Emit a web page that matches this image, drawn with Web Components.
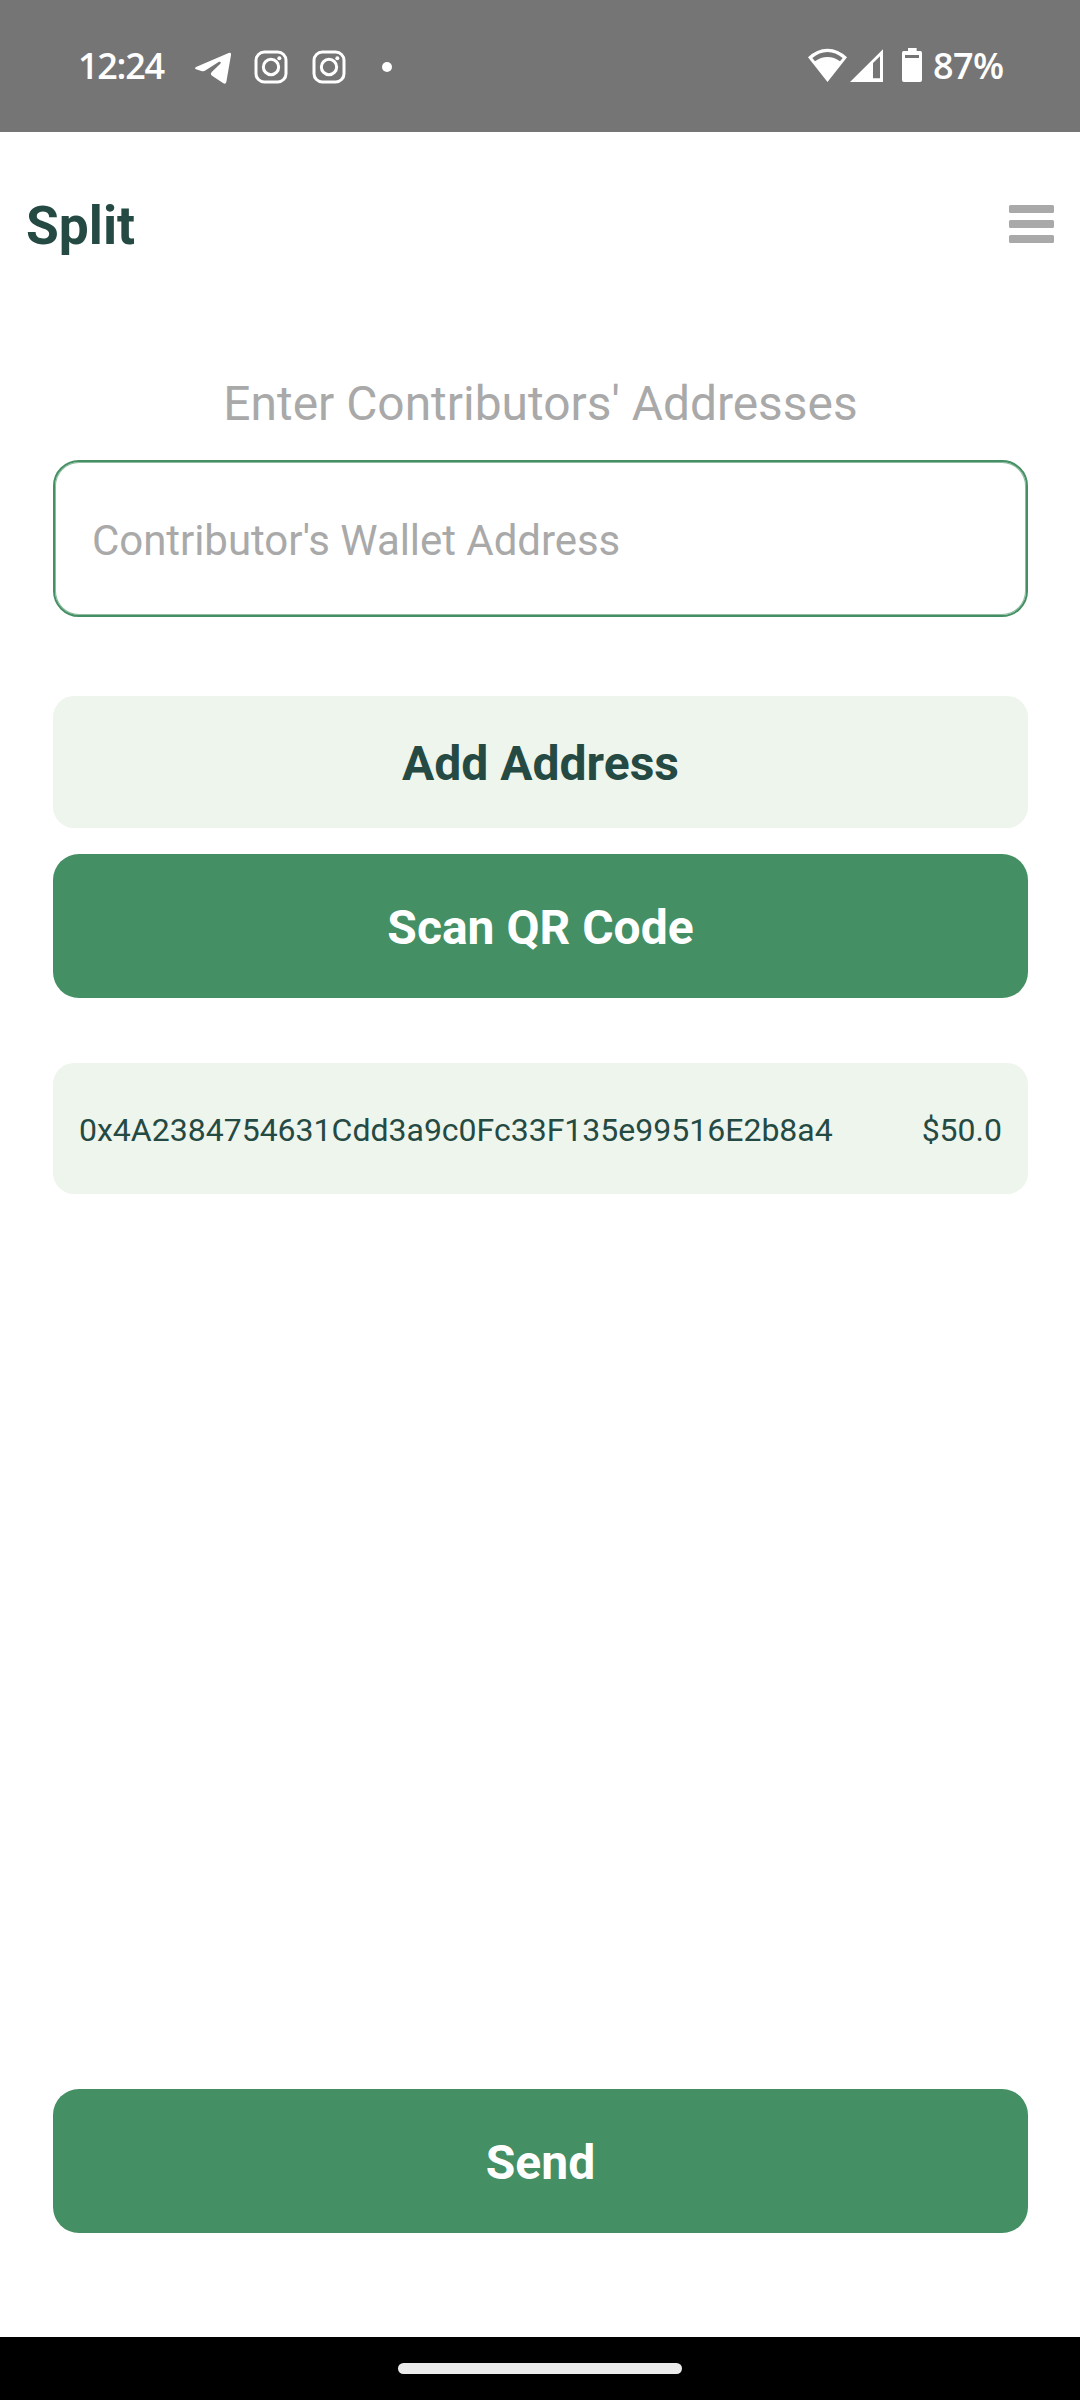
<!DOCTYPE html>
<html lang="en">
<head>
<meta charset="utf-8">
<title>Split</title>
<style>
  html, body { margin: 0; padding: 0; background: #fff; }
  body { font-family: Roboto, "Liberation Sans", sans-serif; width: 1080px; height: 2400px; overflow: hidden; }
</style>
</head>
<body>
<split-screen>
  <status-bar slot="status" time="12:24" battery="87%"></status-bar>
  <app-header slot="header">Split</app-header>
  <form-label>Enter Contributors' Addresses</form-label>
  <address-field>Contributor's Wallet Address</address-field>
  <action-button kind="soft">Add Address</action-button>
  <action-button kind="solid">Scan QR Code</action-button>
  <contributor-row><span slot="address">0x4A2384754631Cdd3a9c0Fc33F135e99516E2b8a4</span><span slot="amount">$50.0</span></contributor-row>
  <action-button kind="solid" slot="footer">Send</action-button>
  <nav-bar slot="nav"></nav-bar>
</split-screen>
<script>
const define = (name, html, init) => {
  const tpl = document.createElement('template');
  tpl.innerHTML = html;
  customElements.define(name, class extends HTMLElement {
    constructor() {
      super();
      this.attachShadow({ mode: 'open' }).append(tpl.content.cloneNode(true));
    }
    connectedCallback() { if (init) init(this, this.shadowRoot); }
  });
};

define('split-screen', `
<style>
  :host { display: flex; flex-direction: column; height: 2400px; background: #fff; }
  main { flex: 1; display: flex; flex-direction: column; padding: 0 52px 0 53px; }
  footer { padding: 0 52px 104px 53px; }
</style>
<slot name="status"></slot>
<slot name="header"></slot>
<main><slot></slot></main>
<footer><slot name="footer"></slot></footer>
<slot name="nav"></slot>`);

define('insta-icon', `
<style>:host { display: block; width: 34px; height: 72px; } svg { display: block; }</style>
<svg width="34" height="72" viewBox="0 0 102 216" fill="none" stroke="#fff" stroke-width="9">
  <rect x="6" y="66" width="90" height="90" rx="25"/>
  <circle cx="51" cy="111" r="23"/>
  <circle cx="76" cy="85" r="6" fill="#fff" stroke="none"/>
</svg>`);

define('status-bar', `
<style>
  :host { display: flex; box-sizing: border-box; height: 132px; padding: 30px 75px 30px 78px; background: #757575; color: #fff;
    font: 600 36px/72px "Open Sans", "Noto Sans", sans-serif; }
  svg { display: block; flex: none; }
  .time { width: 117px; letter-spacing: -1.3px; white-space: nowrap; }
  .tg { margin-right: 23px; }
  insta-icon + insta-icon { margin-left: 24px; }
  .dot { margin-left: 35px; }
  .signal { margin: 0 19px 0 3px; }
  .space { flex: 1; }
  .pct { width: 72px; margin-left: 11px; letter-spacing: -0.6px; white-space: nowrap; }
</style>
<span class="time"></span>
<svg class="tg" width="36" height="72" viewBox="405 0 108 216" fill="#fff">
  <path d="M408 111 L506 69 Q514 66 513 75 L499 156 Q497 164 489 159 L456 137 Q449 132 456 125 L481 101 Q485 94 477 95 L437 121 Q431 125 424 123 L408 118 Q402 115 408 111Z"/>
</svg>
<insta-icon></insta-icon><insta-icon></insta-icon>
<svg class="dot" width="12" height="72" viewBox="962 0 36 216"><circle cx="980" cy="111" r="15" fill="#fff"/></svg>
<span class="space"></span>
<svg width="39" height="72" viewBox="84 0 117 216" fill="#fff">
  <path fill-rule="evenodd" d="M142.500 56 Q175 56 201 82 L142.500 156 L84 82 Q110 56 142.500 56Z M142.500 66 Q118 66 97 84 L105 94 Q122 81 142.500 81 Q163 81 180 94 L188 84 Q167 66 142.500 66Z"/>
</svg>
<svg class="signal" width="33" height="72" viewBox="210 0 99 216" fill="#fff">
  <path fill-rule="evenodd" d="M309 58 V156 H210Z M279 99 V145 H300 V79Z"/>
</svg>
<svg width="20" height="72" viewBox="366 0 60 216" fill="#fff">
  <path fill-rule="evenodd" d="M384 54 H410 V63 H421 Q426 63 426 68 V150 Q426 156 420 156 H372 Q366 156 366 150 V68 Q366 63 371 63 H384Z M375 75 V84 H417 V75Z"/>
</svg>
<span class="pct"></span>`, (el, root) => {
  root.querySelector('.time').textContent = el.getAttribute('time');
  root.querySelector('.pct').textContent = el.getAttribute('battery');
});

define('menu-icon', `
<style>
  :host { display: flex; flex-direction: column; gap: 7px; width: 45px; }
  i { height: 8px; border-radius: 1.500px; background: #a9a9a9; }
</style><i></i><i></i><i></i>`);

define('app-header', `
<style>
  :host { display: flex; align-items: center; justify-content: space-between; box-sizing: border-box; height: 184px; padding: 0 26px; }
  h1 { margin: 3px 0 0; font-size: 53.3px; line-height: 62px; font-weight: 700; color: #254a43; }
</style>
<h1><slot></slot></h1><menu-icon></menu-icon>`);

define('form-label', `
<style>
  :host { display: block; margin-top: 60px; height: 84px; text-align: center; font-size: 47.9px; line-height: 56px; color: #a9a9a9; }
</style><slot></slot>`);

define('address-field', `
<style>
  :host { display: flex; align-items: center; box-sizing: border-box; height: 157px; border: 2px solid #448f63; border-radius: 26px;
    box-shadow: inset 0 0 0 1px #8dbca0; padding: 4px 37px 0; margin-bottom: 79px; font-size: 42px; letter-spacing: -0.05px; line-height: 50px; color: #a9a9a9; }
</style><slot></slot>`);

define('action-button', `
<style>
  :host { display: flex; align-items: center; justify-content: center; box-sizing: border-box; padding-top: 3px;
    font-size: 48px; line-height: 56px; font-weight: 700; }
  :host([kind=soft]) { height: 132px; margin-bottom: 26px; border-radius: 21px; background: #eef5ed; color: #254a43; }
  :host([kind=solid]) { height: 144px; border-radius: 26px; background: #448f63; color: #fff; }
</style><slot></slot>`);

define('contributor-row', `
<style>
  :host { display: flex; align-items: center; justify-content: space-between; box-sizing: border-box; height: 131px; margin-top: 65px;
    padding: 2px 26px 0; border-radius: 21px; background: #eef5ed; color: #254a43; font-size: 32px; line-height: 38px; }
</style><slot name="address"></slot><slot name="amount"></slot>`);

define('nav-bar', `
<style>
  :host { display: flex; justify-content: center; box-sizing: border-box; height: 63px; padding-top: 26px; background: #000; }
  i { width: 284px; height: 11px; border-radius: 6px; background: #ebebeb; }
</style><i></i>`);
</script>
</body>
</html>
